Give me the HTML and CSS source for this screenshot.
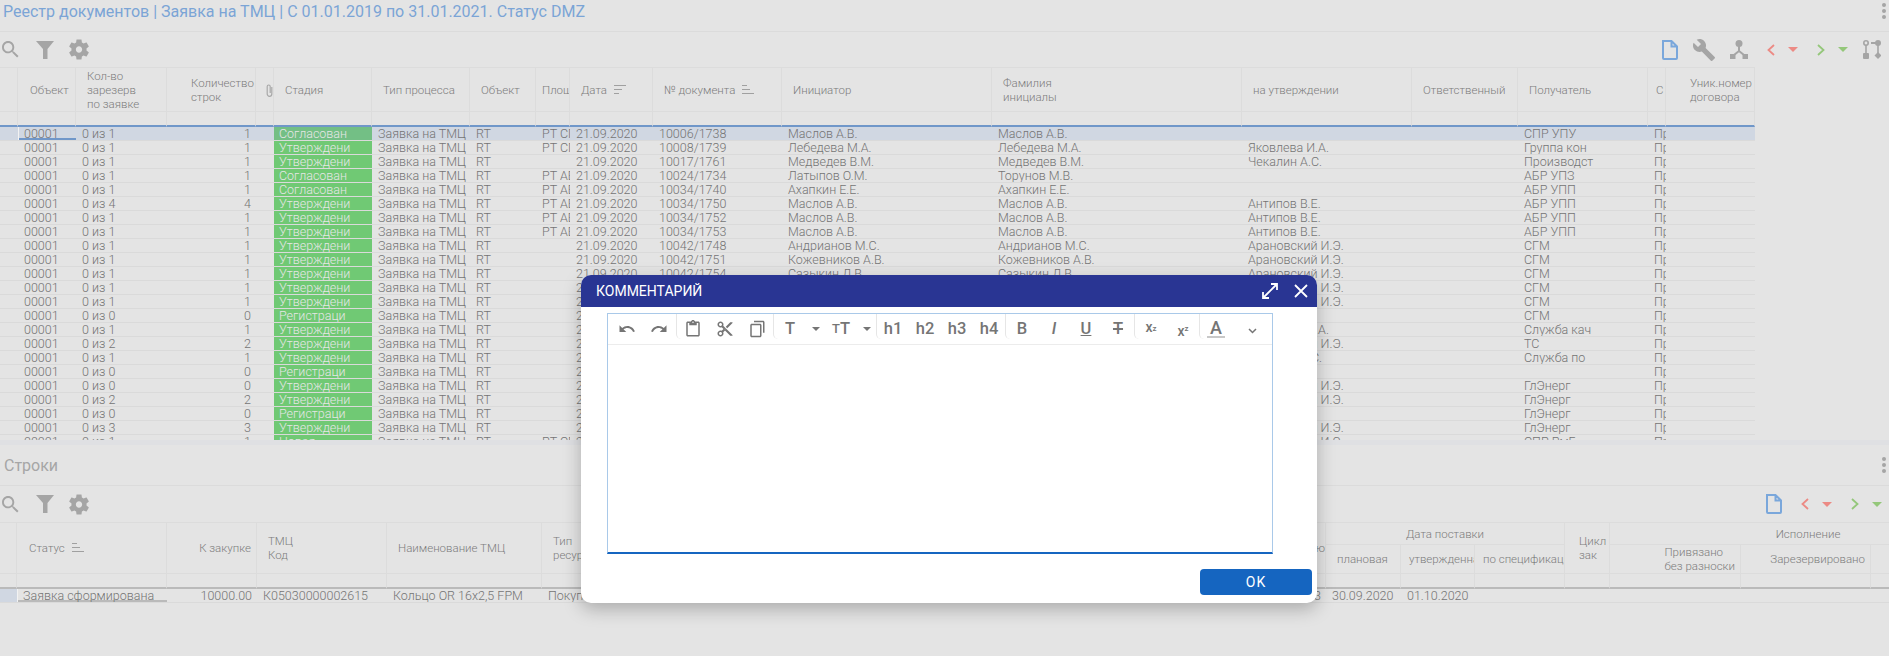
FILE: index.html
```html
<!DOCTYPE html>
<html lang="ru">
<head>
    <meta charset="UTF-8">
    <meta name="viewport" content="width=device-width, initial-scale=1.0">
    <title>Реестр документов</title>
    <link rel="stylesheet" href="styles.css">
</head>
<body>
    <svg class="sprite" xmlns="http://www.w3.org/2000/svg">
        <symbol id="i-search" viewBox="3 3 18 18"><path d="M15.5 14h-.79l-.28-.27C15.41 12.59 16 11.11 16 9.5 16 5.91 13.09 3 9.5 3S3 5.91 3 9.5 5.91 16 9.5 16c1.61 0 3.09-.59 4.23-1.57l.27.28v.79l5 4.99L20.49 19l-4.99-5zm-6 0C7.01 14 5 11.99 5 9.5S7.01 5 9.5 5 14 7.01 14 9.5 11.99 14 9.5 14z"/></symbol>
        <symbol id="i-filter" viewBox="0 0 18 18"><path d="M0 0h18l-6.5 8v10h-4.500V8z"/></symbol>
        <symbol id="i-gear" viewBox="2.500 2 19 20"><path d="M19.140 12.940c.04-.3.06-.61.06-.94 0-.32-.02-.64-.07-.94l2.030-1.580c.18-.14.23-.41.12-.61l-1.920-3.320c-.12-.22-.37-.29-.59-.22l-2.390.96c-.5-.38-1.030-.7-1.620-.94l-.36-2.540c-.04-.24-.24-.41-.48-.41h-3.840c-.24 0-.43.17-.47.41l-.36 2.540c-.59.24-1.130.57-1.620.94l-2.390-.96c-.22-.08-.47 0-.59.22L2.740 8.870c-.12.21-.08.47.12.61l2.030 1.580c-.05.3-.09.63-.09.94s.02.64.07.94l-2.030 1.580c-.18.14-.23.41-.12.61l1.920 3.320c.12.22.37.29.59.22l2.390-.96c.5.38 1.030.7 1.620.94l.36 2.540c.05.24.24.41.48.41h3.840c.24 0 .44-.17.47-.41l.36-2.540c.59-.24 1.130-.56 1.620-.94l2.390.96c.22.08.47 0 .59-.22l1.920-3.320c.12-.22.07-.47-.12-.61l-2.010-1.580zM12 15c-1.650 0-3-1.350-3-3s1.350-3 3-3 3 1.350 3 3-1.350 3-3 3z"/></symbol>
        <symbol id="i-doc" viewBox="0 0 16 20"><path d="M1 1h8.500L15 6.500V18a1 1 0 0 1-1 1H2a1 1 0 0 1-1-1z M9.500 1v5.500H15" fill="none" stroke="#7aa7db" stroke-width="2"/></symbol>
        <symbol id="i-wrench" viewBox="1 1 22 22"><path d="M22.700 19l-9.100-9.100c.9-2.300.4-5-1.500-6.900-2-2-5-2.400-7.400-1.300L9 6 6 9 1.600 4.700C.4 7.100.9 10.100 2.900 12.100c1.900 1.900 4.600 2.400 6.900 1.500l9.100 9.100c.4.4 1 .4 1.400 0l2.300-2.300c.5-.4.5-1.100.1-1.400z"/></symbol>
        <symbol id="i-tree" viewBox="0 0 18 19"><circle cx="9" cy="3.500" r="3.500"/><path d="M9 6v6M9 11l-5 4M9 11l5 4" fill="none" stroke="#a5a5a5" stroke-width="2"/><path d="M0 14h5.500v5H0zM12.500 14H18v5h-5.500z"/></symbol>
        <symbol id="i-branch" viewBox="0 0 18 19"><circle cx="3" cy="3" r="2.200" fill="none" stroke="#a5a5a5" stroke-width="1.600"/><circle cx="15" cy="3" r="3"/><path d="M8 2h6v2H8zM2.200 5h1.600v8H2.200zM14.200 5h1.600v8h-1.600z"/><rect x="0" y="13" width="6" height="6" rx="1"/><path d="M15 12l3.500 3.500L15 19l-3.500-3.500z"/></symbol>
        <symbol id="i-left" viewBox="0 0 8 12"><path d="M7 1L1.500 6 7 11" fill="none" stroke-width="1.800"/></symbol>
        <symbol id="i-right" viewBox="0 0 8 12"><path d="M1 1l5.500 5L1 11" fill="none" stroke-width="1.800"/></symbol>
        <symbol id="i-caret" viewBox="0 0 10 5"><path d="M0 0h10L5 5z"/></symbol>
        <symbol id="i-sort" viewBox="0 0 12 9"><path d="M0 .5h12M0 4.500h8M0 8.500h5" fill="none" stroke="#a0a0a0"/></symbol>
        <symbol id="i-sort-up" viewBox="0 0 12 9"><path d="M0 .5h5M0 4.500h8M0 8.500h12" fill="none" stroke="#a0a0a0"/></symbol>
        <symbol id="i-clip" viewBox="0 0 7 13"><path d="M5.800 3v7a2.300 2.300 0 0 1-4.600 0V2.500a1.500 1.500 0 0 1 3 0V9" fill="none" stroke="#a8a8a8" stroke-width="1.200"/></symbol>
    </svg>

    <section class="panel panel-top">
        <header class="panel-title">
            <h1 class="title-main">Реестр документов | Заявка на ТМЦ | С 01.01.2019 по 31.01.2021. Статус DMZ</h1>
            <span class="dots"><i></i><i></i><i></i></span>
        </header>
        <div class="toolbar">
            <div class="tools">
                <svg class="ic ic-search"><use href="#i-search"/></svg>
                <svg class="ic ic-filter"><use href="#i-filter"/></svg>
                <svg class="ic ic-gear"><use href="#i-gear"/></svg>
            </div>
            <div class="tools">
                <svg class="ic ic-doc"><use href="#i-doc"/></svg>
                <svg class="ic ic-wrench"><use href="#i-wrench"/></svg>
                <svg class="ic ic-tree"><use href="#i-tree"/></svg>
                <div class="nav-pair nav-red">
                    <svg class="ic ic-chev"><use href="#i-left"/></svg>
                    <svg class="ic ic-caret"><use href="#i-caret"/></svg>
                </div>
                <div class="nav-pair nav-green">
                    <svg class="ic ic-chev"><use href="#i-right"/></svg>
                    <svg class="ic ic-caret"><use href="#i-caret"/></svg>
                </div>
                <svg class="ic ic-branch"><use href="#i-branch"/></svg>
            </div>
        </div>
        <table class="grid grid-docs">
            <colgroup>
                <col class="w18"><col class="w58"><col class="w91"><col class="w89"><col class="w18"><col class="w98"><col class="w98"><col class="w66"><col class="w34"><col class="w83"><col class="w129"><col class="w210"><col class="w250"><col class="w170"><col class="w106"><col class="w130"><col class="w18"><col class="w89">
            </colgroup>
            <thead>
                <tr class="head-row">
                    <th></th><th class="pad-obj">Объект</th><th>Кол-во<br>зарезерв<br>по заявке</th><th class="pad-l">Количество<br>строк</th><th class="clip-col"><svg class="ic-clip"><use href="#i-clip"/></svg></th><th>Стадия</th><th>Тип процесса</th><th>Объект</th><th class="pad-s">Площ</th>
                    <th>Дата <svg class="ic-sort"><use href="#i-sort"/></svg></th><th>№ документа <svg class="ic-sort"><use href="#i-sort-up"/></svg></th><th>Инициатор</th><th>Фамилия<br>инициалы</th><th>на утверждении</th><th>Ответственный</th><th>Получатель</th><th class="pad-m">С</th><th class="pad-l">Уник.номер<br>договора</th>
                </tr>
                <tr class="filter-row">
                    <th></th><th></th><th></th><th></th><th></th><th></th><th></th><th></th><th></th><th></th><th></th><th></th><th></th><th></th><th></th><th></th><th></th><th></th>
                </tr>
            </thead>
            <tbody>
                <tr class="selected"><td></td><td class="focus">00001</td><td>0 из 1</td><td class="num">1</td><td></td><td class="stage">Согласован</td><td>Заявка на ТМЦ</td><td>RT</td><td>РТ СГМ</td><td>21.09.2020</td><td>10006/1738</td><td>Маслов А.В.</td><td>Маслов А.В.</td><td></td><td></td><td>СПР УПУ</td><td>Проект</td><td></td></tr>
                <tr><td></td><td>00001</td><td>0 из 1</td><td class="num">1</td><td></td><td class="stage">Утверждени</td><td>Заявка на ТМЦ</td><td>RT</td><td>РТ СГМ</td><td>21.09.2020</td><td>10008/1739</td><td>Лебедева М.А.</td><td>Лебедева М.А.</td><td>Яковлева И.А.</td><td></td><td>Группа кон</td><td>Проект</td><td></td></tr>
                <tr><td></td><td>00001</td><td>0 из 1</td><td class="num">1</td><td></td><td class="stage">Утверждени</td><td>Заявка на ТМЦ</td><td>RT</td><td></td><td>21.09.2020</td><td>10017/1761</td><td>Медведев В.М.</td><td>Медведев В.М.</td><td>Чекалин А.С.</td><td></td><td>Производст</td><td>Проект</td><td></td></tr>
                <tr><td></td><td>00001</td><td>0 из 1</td><td class="num">1</td><td></td><td class="stage">Согласован</td><td>Заявка на ТМЦ</td><td>RT</td><td>РТ АБР</td><td>21.09.2020</td><td>10024/1734</td><td>Латыпов О.М.</td><td>Торунов М.В.</td><td></td><td></td><td>АБР УПЗ</td><td>Проект</td><td></td></tr>
                <tr><td></td><td>00001</td><td>0 из 1</td><td class="num">1</td><td></td><td class="stage">Согласован</td><td>Заявка на ТМЦ</td><td>RT</td><td>РТ АБР</td><td>21.09.2020</td><td>10034/1740</td><td>Ахапкин Е.Е.</td><td>Ахапкин Е.Е.</td><td></td><td></td><td>АБР УПП</td><td>Проект</td><td></td></tr>
                <tr><td></td><td>00001</td><td>0 из 4</td><td class="num">4</td><td></td><td class="stage">Утверждени</td><td>Заявка на ТМЦ</td><td>RT</td><td>РТ АБР</td><td>21.09.2020</td><td>10034/1750</td><td>Маслов А.В.</td><td>Маслов А.В.</td><td>Антипов В.Е.</td><td></td><td>АБР УПП</td><td>Проект</td><td></td></tr>
                <tr><td></td><td>00001</td><td>0 из 1</td><td class="num">1</td><td></td><td class="stage">Утверждени</td><td>Заявка на ТМЦ</td><td>RT</td><td>РТ АБР</td><td>21.09.2020</td><td>10034/1752</td><td>Маслов А.В.</td><td>Маслов А.В.</td><td>Антипов В.Е.</td><td></td><td>АБР УПП</td><td>Проект</td><td></td></tr>
                <tr><td></td><td>00001</td><td>0 из 1</td><td class="num">1</td><td></td><td class="stage">Утверждени</td><td>Заявка на ТМЦ</td><td>RT</td><td>РТ АБР</td><td>21.09.2020</td><td>10034/1753</td><td>Маслов А.В.</td><td>Маслов А.В.</td><td>Антипов В.Е.</td><td></td><td>АБР УПП</td><td>Проект</td><td></td></tr>
                <tr><td></td><td>00001</td><td>0 из 1</td><td class="num">1</td><td></td><td class="stage">Утверждени</td><td>Заявка на ТМЦ</td><td>RT</td><td></td><td>21.09.2020</td><td>10042/1748</td><td>Андрианов М.С.</td><td>Андрианов М.С.</td><td>Арановский И.Э.</td><td></td><td>СГМ</td><td>Проект</td><td></td></tr>
                <tr><td></td><td>00001</td><td>0 из 1</td><td class="num">1</td><td></td><td class="stage">Утверждени</td><td>Заявка на ТМЦ</td><td>RT</td><td></td><td>21.09.2020</td><td>10042/1751</td><td>Кожевников А.В.</td><td>Кожевников А.В.</td><td>Арановский И.Э.</td><td></td><td>СГМ</td><td>Проект</td><td></td></tr>
                <tr><td></td><td>00001</td><td>0 из 1</td><td class="num">1</td><td></td><td class="stage">Утверждени</td><td>Заявка на ТМЦ</td><td>RT</td><td></td><td>21.09.2020</td><td>10042/1754</td><td>Сазыкин Д.В.</td><td>Сазыкин Д.В.</td><td>Арановский И.Э.</td><td></td><td>СГМ</td><td>Проект</td><td></td></tr>
                <tr><td></td><td>00001</td><td>0 из 1</td><td class="num">1</td><td></td><td class="stage">Утверждени</td><td>Заявка на ТМЦ</td><td>RT</td><td></td><td>21.09.2020</td><td></td><td></td><td></td><td>Арановский И.Э.</td><td></td><td>СГМ</td><td>Проект</td><td></td></tr>
                <tr><td></td><td>00001</td><td>0 из 1</td><td class="num">1</td><td></td><td class="stage">Утверждени</td><td>Заявка на ТМЦ</td><td>RT</td><td></td><td>21.09.2020</td><td></td><td></td><td></td><td>Арановский И.Э.</td><td></td><td>СГМ</td><td>Проект</td><td></td></tr>
                <tr><td></td><td>00001</td><td>0 из 0</td><td class="num">0</td><td></td><td class="stage">Регистраци</td><td>Заявка на ТМЦ</td><td>RT</td><td></td><td>21.09.2020</td><td></td><td></td><td></td><td></td><td></td><td>СГМ</td><td>Проект</td><td></td></tr>
                <tr><td></td><td>00001</td><td>0 из 1</td><td class="num">1</td><td></td><td class="stage">Утверждени</td><td>Заявка на ТМЦ</td><td>RT</td><td></td><td>21.09.2020</td><td></td><td></td><td></td><td>Яковлева И.А.</td><td></td><td>Служба кач</td><td>Проект</td><td></td></tr>
                <tr><td></td><td>00001</td><td>0 из 2</td><td class="num">2</td><td></td><td class="stage">Утверждени</td><td>Заявка на ТМЦ</td><td>RT</td><td></td><td>21.09.2020</td><td></td><td></td><td></td><td>Арановский И.Э.</td><td></td><td>ТС</td><td>Проект</td><td></td></tr>
                <tr><td></td><td>00001</td><td>0 из 1</td><td class="num">1</td><td></td><td class="stage">Утверждени</td><td>Заявка на ТМЦ</td><td>RT</td><td></td><td>21.09.2020</td><td></td><td></td><td></td><td>Чекалин А.С.</td><td></td><td>Служба по</td><td>Проект</td><td></td></tr>
                <tr><td></td><td>00001</td><td>0 из 0</td><td class="num">0</td><td></td><td class="stage">Регистраци</td><td>Заявка на ТМЦ</td><td>RT</td><td></td><td>21.09.2020</td><td></td><td></td><td></td><td></td><td></td><td></td><td>Проект</td><td></td></tr>
                <tr><td></td><td>00001</td><td>0 из 0</td><td class="num">0</td><td></td><td class="stage">Утверждени</td><td>Заявка на ТМЦ</td><td>RT</td><td></td><td>21.09.2020</td><td></td><td></td><td></td><td>Арановский И.Э.</td><td></td><td>ГлЭнерг</td><td>Проект</td><td></td></tr>
                <tr><td></td><td>00001</td><td>0 из 2</td><td class="num">2</td><td></td><td class="stage">Утверждени</td><td>Заявка на ТМЦ</td><td>RT</td><td></td><td>21.09.2020</td><td></td><td></td><td></td><td>Арановский И.Э.</td><td></td><td>ГлЭнерг</td><td>Проект</td><td></td></tr>
                <tr><td></td><td>00001</td><td>0 из 0</td><td class="num">0</td><td></td><td class="stage">Регистраци</td><td>Заявка на ТМЦ</td><td>RT</td><td></td><td>21.09.2020</td><td></td><td></td><td></td><td></td><td></td><td>ГлЭнерг</td><td>Проект</td><td></td></tr>
                <tr><td></td><td>00001</td><td>0 из 3</td><td class="num">3</td><td></td><td class="stage">Утверждени</td><td>Заявка на ТМЦ</td><td>RT</td><td></td><td>21.09.2020</td><td></td><td></td><td></td><td>Арановский И.Э.</td><td></td><td>ГлЭнерг</td><td>Проект</td><td></td></tr>
                <tr><td></td><td>00001</td><td>0 из 1</td><td class="num">1</td><td></td><td class="stage">Новая</td><td>Заявка на ТМЦ</td><td>RT</td><td>РТ СГМ</td><td>21.09.2020</td><td></td><td></td><td></td><td>Арановский И.Э.</td><td></td><td>СПР РмБ</td><td>Проект</td><td></td></tr>
            </tbody>
        </table>
    </section>

    <div class="splitter"></div>

    <section class="panel panel-bottom">
        <header class="panel-title panel-title-low">
            <h2 class="title-sub">Строки</h2>
            <span class="dots"><i></i><i></i><i></i></span>
        </header>
        <div class="toolbar toolbar-low">
            <div class="tools">
                <svg class="ic ic-search"><use href="#i-search"/></svg>
                <svg class="ic ic-filter"><use href="#i-filter"/></svg>
                <svg class="ic ic-gear"><use href="#i-gear"/></svg>
            </div>
            <div class="tools">
                <svg class="ic ic-doc"><use href="#i-doc"/></svg>
                <div class="nav-pair nav-red">
                    <svg class="ic ic-chev"><use href="#i-left"/></svg>
                    <svg class="ic ic-caret"><use href="#i-caret"/></svg>
                </div>
                <div class="nav-pair nav-green">
                    <svg class="ic ic-chev"><use href="#i-right"/></svg>
                    <svg class="ic ic-caret"><use href="#i-caret"/></svg>
                </div>
            </div>
        </div>
        <table class="grid grid-lines">
            <colgroup>
                <col class="w17"><col class="w150"><col class="w90"><col class="w130"><col class="w155"><col class="w158"><col class="w626"><col class="w75"><col class="w74"><col class="w90"><col class="w45"><col class="w131"><col class="w130"><col class="w136">
            </colgroup>
            <thead>
                <tr class="group-row">
                    <th rowspan="2"></th><th rowspan="2" class="pad-obj">Статус <svg class="ic-sort"><use href="#i-sort-up"/></svg></th><th rowspan="2" class="right">К закупке</th><th rowspan="2">ТМЦ<br>Код</th><th rowspan="2">Наименование ТМЦ</th><th rowspan="2">Тип<br>ресурса</th><th rowspan="2" class="right flush">ю</th>
                    <th colspan="3" class="center">Дата поставки</th><th rowspan="2" class="pad-c">Цикл<br>зак</th><th colspan="3" class="center">Исполнение</th>
                </tr>
                <tr class="sub-row">
                    <th>плановая</th><th class="pad-m">утвержденная</th><th class="pad-m">по спецификации</th><th class="right"><span class="left-block">Привязано<br>без разноски</span></th><th class="right">Зарезервировано</th><th></th>
                </tr>
                <tr class="filter-row">
                    <th></th><th></th><th></th><th></th><th></th><th></th><th></th><th></th><th></th><th></th><th></th><th></th><th></th><th></th>
                </tr>
            </thead>
            <tbody>
                <tr><td class="marker"></td><td class="focus">Заявка сформирована</td><td class="num">10000.00</td><td>К05030000002615</td><td>Кольцо OR 16x2,5 FPM</td><td>Покупное</td><td class="num">3</td><td>30.09.2020</td><td>01.10.2020</td><td></td><td></td><td></td><td></td><td></td></tr>
            </tbody>
        </table>
    </section>

    <div class="modal">
        <header class="modal-head">
            <span class="modal-title">КОММЕНТАРИЙ</span>
            <svg class="modal-btn" viewBox="0 0 16 16"><path d="M1 15L15 1M9 1h6v6M1 9v6h6" fill="none" stroke="#fff" stroke-width="1.800"/></svg>
            <svg class="modal-btn" viewBox="0 0 14 14"><path d="M1 1l12 12M13 1L1 13" fill="none" stroke="#fff" stroke-width="1.800"/></svg>
        </header>
        <div class="modal-body">
            <div class="editor">
                <div class="ed-toolbar">
                    <div class="ed-group ed-group-first">
                        <span class="ed-item"><svg class="ed-svg" viewBox="0 0 24 24"><path d="M12.500 8c-2.650 0-5.050.99-6.900 2.600L2 7v9h9l-3.620-3.620c1.390-1.160 3.160-1.880 5.120-1.880 3.540 0 6.550 2.310 7.600 5.500l2.370-.78C21.080 11.030 17.150 8 12.500 8z"/></svg></span>
                        <span class="ed-item"><svg class="ed-svg" viewBox="0 0 24 24"><path d="M18.400 10.600C16.550 8.990 14.150 8 11.500 8c-4.650 0-8.580 3.030-9.960 7.220L3.900 16c1.050-3.190 4.050-5.500 7.600-5.500 1.950 0 3.730.72 5.120 1.880L13 16h9V7l-3.600 3.600z"/></svg></span>
                    </div>
                    <div class="ed-group">
                        <span class="ed-item"><svg class="ed-svg" viewBox="0 0 24 24"><path d="M19 2h-4.180C14.400.84 13.300 0 12 0c-1.300 0-2.400.84-2.820 2H5c-1.100 0-2 .9-2 2v16c0 1.100.9 2 2 2h14c1.100 0 2-.9 2-2V4c0-1.100-.9-2-2-2zm-7 0c.55 0 1 .45 1 1s-.45 1-1 1-1-.45-1-1 .45-1 1-1zm7 18H5V4h2v3h10V4h2v16z"/></svg></span>
                        <span class="ed-item"><svg class="ed-svg" viewBox="0 0 24 24"><path d="M9.640 7.640c.23-.5.36-1.050.36-1.640 0-2.210-1.790-4-4-4S2 3.790 2 6s1.790 4 4 4c.59 0 1.140-.13 1.640-.36L10 12l-2.360 2.360C7.140 14.130 6.590 14 6 14c-2.210 0-4 1.790-4 4s1.790 4 4 4 4-1.790 4-4c0-.59-.13-1.140-.36-1.640L12 14l7 7h3v-1L9.640 7.640zM6 8c-1.100 0-2-.89-2-2s.9-2 2-2 2 .89 2 2-.9 2-2 2zm0 12c-1.100 0-2-.89-2-2s.9-2 2-2 2 .89 2 2-.9 2-2 2zm6-7.500c-.28 0-.5-.22-.5-.5s.22-.5.5-.5.5.22.5.5-.22.5-.5.5zM19 3l-6 6 2 2 7-7V3z"/></svg></span>
                        <span class="ed-item"><svg class="ed-svg flip" viewBox="0 0 24 24"><path d="M16 1H4c-1.100 0-2 .9-2 2v14h2V3h12V1zm3 4H8c-1.100 0-2 .9-2 2v14c0 1.100.9 2 2 2h11c1.100 0 2-.9 2-2V7c0-1.100-.9-2-2-2zm0 16H8V7h11v14z"/></svg></span>
                    </div>
                    <div class="ed-group">
                        <span class="ed-item ed-text">T</span>
                        <span class="ed-drop"><svg class="ed-caret"><use href="#i-caret"/></svg></span>
                        <span class="ed-item ed-text"><small>T</small>T</span>
                        <span class="ed-drop"><svg class="ed-caret"><use href="#i-caret"/></svg></span>
                    </div>
                    <div class="ed-group">
                        <span class="ed-item ed-text">h1</span>
                        <span class="ed-item ed-text">h2</span>
                        <span class="ed-item ed-text">h3</span>
                        <span class="ed-item ed-text">h4</span>
                    </div>
                    <div class="ed-group">
                        <span class="ed-item ed-text">B</span>
                        <span class="ed-item ed-text"><em>I</em></span>
                        <span class="ed-item ed-text"><u>U</u></span>
                        <span class="ed-item ed-text"><s>T</s></span>
                    </div>
                    <div class="ed-group">
                        <span class="ed-item ed-text ed-script"><span class="x-up">x</span><sub>z</sub></span>
                        <span class="ed-item ed-text ed-script"><span class="x-down">x</span><sup>z</sup></span>
                    </div>
                    <div class="ed-group">
                        <span class="ed-item ed-text ed-color">A</span>
                        <span class="ed-item ed-more"><svg class="ed-chev" viewBox="0 0 9 6"><path d="M1 1l3.500 3.500L8 1" fill="none" stroke="#757575" stroke-width="1.500"/></svg></span>
                    </div>
                </div>
                <div class="ed-area"></div>
            </div>
            <div class="modal-foot">
                <button class="ok-btn">OK</button>
            </div>
        </div>
    </div>
</body>
</html>
```

FILE: styles.css
```css
html, body {
    margin: 0;
    height: 656px;
    overflow: hidden;
}
body {
    background-color: #e4e4e4;
    font-family: Roboto, "Liberation Sans", sans-serif;
    font-weight: 300;
    color: #747474;
    position: relative;
}
.sprite {
    display: none;
}

/* panels */
.panel {
    overflow: hidden;
}
.panel-top {
    height: 440px;
}
.panel-bottom {
    height: 211px;
}
.splitter {
    height: 5px;
    background-color: #dfe0e3;
}
.panel-title {
    height: 31px;
    border-bottom: 1px solid #dbdbdb;
    display: flex;
    justify-content: space-between;
    align-items: center;
    padding: 0 3px;
}
.panel-title-low {
    height: 40px;
    padding: 0 3px 0 4px;
}
.title-main {
    margin: 0 0 8px;
    font-size: 16px;
    font-weight: 400;
    line-height: 22px;
    color: #7ba4d6;
}
.title-sub {
    margin: 0;
    font-size: 16px;
    font-weight: 400;
    color: #a6a6a6;
}
.dots {
    display: flex;
    flex-direction: column;
    gap: 2px;
    margin-bottom: 9px;
}
.panel-title-low .dots {
    margin-bottom: 0;
}
.dots i {
    display: block;
    width: 4px;
    height: 4px;
    border-radius: 50%;
    background-color: #a5a5a5;
}

/* toolbars */
.toolbar {
    height: 35px;
    display: flex;
    justify-content: space-between;
    align-items: center;
    padding: 0 8px 0 2px;
}
.toolbar-low {
    height: 36px;
    padding-right: 7px;
}
.tools {
    display: flex;
    align-items: center;
    gap: 15px;
}
.ic {
    display: block;
    fill: #a5a5a5;
}
.ic-search {
    width: 17px;
    height: 17px;
}
.ic-filter {
    width: 18px;
    height: 18px;
    margin-left: 2px;
}
.ic-gear {
    width: 20px;
    height: 21px;
}
.ic-doc {
    width: 16px;
    height: 20px;
}
.ic-wrench {
    width: 22px;
    height: 22px;
}
.ic-tree, .ic-branch {
    width: 18px;
    height: 19px;
}
.ic-chev {
    width: 8px;
    height: 12px;
}
.ic-caret {
    width: 10px;
    height: 5px;
}
.nav-pair {
    display: flex;
    align-items: center;
    gap: 13px;
    margin-left: 4px;
}
.nav-red .ic {
    fill: #ec8a84;
    stroke: #ec8a84;
}
.nav-green .ic {
    fill: #94c77a;
    stroke: #94c77a;
}
.nav-red .ic-caret, .nav-green .ic-caret {
    stroke: none;
}

/* tables */
.grid {
    table-layout: fixed;
    border-collapse: separate;
    border-spacing: 0;
    font-size: 12.5px;
    line-height: 13px;
}
.grid-docs {
    width: 1755px;
}
.grid-lines {
    width: 2005px;
}
.w17 { width: 17px; }
.w18 { width: 18px; }
.w34 { width: 34px; }
.w45 { width: 45px; }
.w58 { width: 58px; }
.w66 { width: 66px; }
.w74 { width: 74px; }
.w75 { width: 75px; }
.w83 { width: 83px; }
.w89 { width: 89px; }
.w90 { width: 90px; }
.w91 { width: 91px; }
.w98 { width: 98px; }
.w106 { width: 106px; }
.w129 { width: 129px; }
.w130 { width: 130px; }
.w131 { width: 131px; }
.w136 { width: 136px; }
.w150 { width: 150px; }
.w155 { width: 155px; }
.w158 { width: 158px; }
.w170 { width: 170px; }
.w210 { width: 210px; }
.w250 { width: 250px; }
.w626 { width: 626px; }

.grid th {
    box-sizing: border-box;
    padding: 0 4px 0 11px;
    font-size: 11.5px;
    font-weight: 300;
    line-height: 14px;
    text-align: left;
    white-space: nowrap;
    overflow: hidden;
    color: #7c7c7c;
    border-top: 1px solid #dcdcdc;
    border-right: 1px solid #dcdcdc;
}
.grid th.pad-s {
    padding-left: 6px;
}
.grid th.pad-m {
    padding-left: 8px;
}
.grid th.pad-obj {
    padding-left: 12px;
}
.grid th.pad-c {
    padding-left: 14px;
}
.grid th.pad-l {
    padding-left: 24px;
}
.grid th.clip-col {
    padding: 0;
    text-align: right;
}
.grid th.right {
    text-align: right;
    padding: 0 5px 0 0;
}
.grid th.flush {
    padding: 0;
}
.grid th.center {
    text-align: center;
    padding: 0;
}
.left-block {
    display: inline-block;
    text-align: left;
}
.ic-clip {
    width: 7px;
    height: 13px;
    vertical-align: middle;
}
.ic-sort {
    width: 12px;
    height: 9px;
    margin-left: 4px;
}
.head-row {
    height: 44px;
}
.filter-row {
    height: 16px;
}
.grid .filter-row th {
    border-bottom: 2px solid #7097c9;
}
.grid-lines .filter-row th {
    border-bottom-color: #bababa;
}
.group-row {
    height: 22px;
}
.sub-row {
    height: 29px;
}
.grid td {
    box-sizing: border-box;
    height: 14px;
    padding: 0 0 0 6px;
    white-space: nowrap;
    overflow: hidden;
    border-bottom: 1px solid #dadada;
}
.grid td.num {
    text-align: right;
    padding: 0 5px 0 0;
}
.grid td.stage {
    padding-left: 5px;
    background-color: #70c974;
    color: #e6e6e6;
}
.grid .selected td {
    background-color: #d0d7e2;
}
.grid .selected td.stage {
    background-color: #73bf85;
}
.grid td.focus {
    box-shadow: inset 1px 0 0 #f2f2f2, inset 0 -2px 0 #7097c9;
}
.grid-lines td.focus {
    box-shadow: inset 1px 0 0 #f2f2f2, inset 0 -2px 0 #bababa;
}
.grid td.marker {
    background-color: #d0d7e2;
}

/* comment dialog */
.modal {
    position: absolute;
    left: 581px;
    top: 275px;
    width: 736px;
    height: 328px;
    background-color: #fff;
    border-radius: 10px;
    box-shadow: 0 6px 18px rgba(0, 0, 0, 0.25);
    display: flex;
    flex-direction: column;
    overflow: hidden;
}
.modal-head {
    height: 32px;
    flex: none;
    background-color: #293593;
    display: flex;
    align-items: center;
    padding: 0 9px 0 15px;
    gap: 16px;
}
.modal-title {
    flex: 1;
    font-size: 14px;
    font-weight: 400;
    color: #fff;
}
.modal-btn {
    width: 16px;
    height: 16px;
}
.modal-btn + .modal-btn {
    width: 14px;
    height: 14px;
}
.modal-body {
    flex: 1;
    display: flex;
    flex-direction: column;
    padding: 6px 5px 8px 26px;
}
.editor {
    width: 666px;
    height: 241px;
    box-sizing: border-box;
    border: 1px solid #a9c9e9;
    border-bottom: 2px solid #1565c0;
    display: flex;
    flex-direction: column;
}
.ed-toolbar {
    height: 31px;
    flex: none;
    box-sizing: border-box;
    border-bottom: 1px solid #ececec;
    display: flex;
    padding-left: 3px;
}
.ed-group {
    display: flex;
    height: 25px;
    border-left: 1px solid #e6e6e6;
    border-bottom-left-radius: 5px;
}
.ed-group-first {
    border-left: none;
    padding-right: 1px;
}
.ed-item {
    width: 32px;
    height: 29px;
    display: flex;
    align-items: center;
    justify-content: center;
}
.ed-svg {
    width: 18px;
    height: 18px;
    fill: #757575;
}
.ed-svg.flip {
    transform: scaleX(-1);
}
.ed-text {
    font-size: 16.500px;
    font-weight: 500;
    color: #757575;
}
.ed-text small {
    font-size: 13px;
}
.ed-text s {
    text-decoration-thickness: 2px;
}
.ed-script {
    font-size: 14px;
}
.x-up {
    position: relative;
    top: -2px;
}
.x-down {
    position: relative;
    top: 2px;
}
.ed-script sub, .ed-script sup {
    font-size: 8px;
    line-height: 0;
}
.ed-color {
    flex-direction: column;
    line-height: 16px;
    font-size: 18px;
}
.ed-color::after {
    content: "";
    width: 18px;
    height: 2px;
    background-color: #c8c8c8;
}
.ed-drop {
    width: 19px;
    height: 29px;
    display: flex;
    align-items: center;
    justify-content: center;
}
.ed-caret {
    width: 8px;
    height: 4px;
    fill: #757575;
}
.ed-more {
    padding-left: 4px;
}
.ed-chev {
    width: 9px;
    height: 6px;
    margin-top: 4px;
}
.ed-area {
    flex: 1;
}
.modal-foot {
    flex: 1;
    display: flex;
    justify-content: flex-end;
    align-items: flex-end;
}
.ok-btn {
    width: 112px;
    height: 26px;
    border: none;
    border-radius: 4px;
    background-color: #1565c0;
    color: #fff;
    font-family: Roboto, "Liberation Sans", sans-serif;
    font-size: 14px;
    letter-spacing: 1px;
}
```
